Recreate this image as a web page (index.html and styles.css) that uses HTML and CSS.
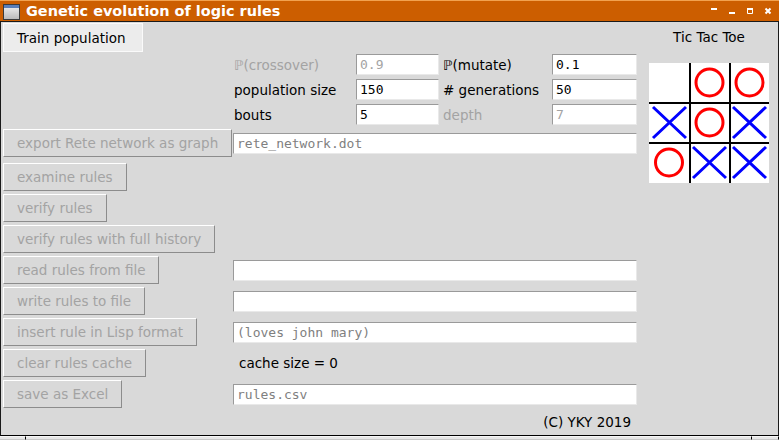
FILE: index.html
```html
<!DOCTYPE html>
<html>
<head>
<meta charset="utf-8">
<link rel="stylesheet" href="styles.css">
</head>
<body>
<div class="window">
  <div class="titlebar">
    <svg class="app-icon" width="17" height="16" viewBox="0 0 17 16">
      <defs>
        <linearGradient id="ig" x1="0" y1="0" x2="0" y2="1">
          <stop offset="0" stop-color="#f4f4f4"/>
          <stop offset="1" stop-color="#b8b8b8"/>
        </linearGradient>
      </defs>
      <rect x="0.5" y="0.5" width="16" height="15" fill="url(#ig)" stroke="#3a3a3a"/>
      <rect x="1" y="1" width="15" height="3" fill="#5b7fb8"/>
    </svg>
    <span class="title">Genetic evolution of logic rules</span>
    <svg class="controls" width="75" height="21" viewBox="0 0 75 21">
      <rect x="7" y="8" width="6" height="2" fill="#fff"/>
      <rect x="25" y="12" width="6" height="2" fill="#fff"/>
      <path d="M43.5 8.5h5v5h-5z" fill="none" stroke="#fff" stroke-width="1"/>
      <rect x="43" y="8" width="6" height="2" fill="#fff"/>
      <path d="M61.5 8.5l5 5M66.5 8.5l-5 5" stroke="#fff" stroke-width="2"/>
    </svg>
  </div>
  <div class="content">
    <div class="left">
      <div class="train-row"><div class="btn active">Train population</div></div>
      <div class="params">
        <div class="plabel dim">ℙ(crossover)</div>
        <div class="entry small mono dim">0.9</div>
        <div class="plabel">ℙ(mutate)</div>
        <div class="entry small mono">0.1</div>
        <div class="plabel">population size</div>
        <div class="entry small mono">150</div>
        <div class="plabel"># generations</div>
        <div class="entry small mono">50</div>
        <div class="plabel">bouts</div>
        <div class="entry small mono">5</div>
        <div class="plabel dim">depth</div>
        <div class="entry small mono dim">7</div>
      </div>
      <div class="rows">
        <div class="row first">
          <div class="btn">export Rete network as graph</div>
          <div class="entry mono grey">rete_network.dot</div>
        </div>
        <div class="row"><div class="btn">examine rules</div></div>
        <div class="row"><div class="btn">verify rules</div></div>
        <div class="row"><div class="btn">verify rules with full history</div></div>
        <div class="row">
          <div class="btn">read rules from file</div>
          <div class="entry mono"></div>
        </div>
        <div class="row">
          <div class="btn">write rules to file</div>
          <div class="entry mono"></div>
        </div>
        <div class="row">
          <div class="btn">insert rule in Lisp format</div>
          <div class="entry mono grey">(loves john mary)</div>
        </div>
        <div class="row">
          <div class="btn">clear rules cache</div>
          <div class="cache">cache size = 0</div>
        </div>
        <div class="row">
          <div class="btn">save as Excel</div>
          <div class="entry mono grey">rules.csv</div>
        </div>
      </div>
      <div class="footer">(C) YKY 2019</div>
    </div>
    <div class="right">
      <div class="ttt-label">Tic Tac Toe</div>
      <svg class="board" width="120" height="120" viewBox="0 0 120 120">
        <rect width="120" height="120" fill="#fff"/>
        <rect x="40" y="0" width="2" height="120" fill="#000"/>
        <rect x="80" y="0" width="2" height="120" fill="#000"/>
        <rect x="0" y="39" width="120" height="2" fill="#000"/>
        <rect x="0" y="79" width="120" height="2" fill="#000"/>
        <g fill="none" stroke="#f00" stroke-width="3">
          <circle cx="60.5" cy="19.5" r="13.5"/>
          <circle cx="100.5" cy="19.5" r="13.5"/>
          <circle cx="60.5" cy="59.5" r="13.5"/>
          <circle cx="20" cy="99.5" r="13.5"/>
        </g>
        <g stroke="#00f" stroke-width="3">
          <path d="M4 44l33 31M37 44l-33 31"/>
          <path d="M84 44l33 31M117 44l-33 31"/>
          <path d="M44 84l33 31M77 84l-33 31"/>
          <path d="M84 84l33 31M117 84l-33 31"/>
        </g>
      </svg>
    </div>
  </div>
  <div class="bottom">
    <div class="seg s1"></div>
    <div class="seg s2"></div>
    <div class="seg s3"></div>
  </div>
</div>
</body>
</html>
```

FILE: styles.css
```css
html, body {
  margin: 0;
  padding: 0;
  background: #d9d9d9;
}
body {
  width: 779px;
  height: 440px;
  overflow: hidden;
  font-family: "DejaVu Sans", sans-serif;
  font-size: 13.5px;
  color: #000;
}
.window {
  width: 779px;
  height: 440px;
  display: flex;
  flex-direction: column;
  background: #d9d9d9;
}
.titlebar {
  height: 20px;
  background: #cc5e00;
  border-top: 1px solid #f2a24f;
  border-bottom: 1px solid #1a1a1a;
  display: flex;
  align-items: center;
  flex: none;
}
.app-icon {
  margin-left: 3px;
  margin-top: 1px;
  flex: none;
}
.title {
  margin-left: 6px;
  font-weight: bold;
  font-size: 14.45px;
  color: #fff;
  line-height: 16px;
}
.controls {
  margin-left: auto;
  margin-top: -1px;
  flex: none;
}
.content {
  flex: 1;
  display: flex;
  border-left: 1px solid #1a1a1a;
  border-right: 1px solid #1a1a1a;
  border-bottom: 1px solid #000;
  min-height: 0;
}
.left {
  width: 634px;
  padding-left: 2px;
  padding-top: 1px;
  display: flex;
  flex-direction: column;
}
.train-row {
  height: 29px;
  display: flex;
}
.btn {
  box-sizing: border-box;
  height: 28px;
  padding: 0 13px;
  display: flex;
  align-items: center;
  white-space: nowrap;
  color: #a3a3a3;
  background: #d9d9d9;
  border-top: 1px solid #ffffff;
  border-left: 1px solid #ffffff;
  border-bottom: 1px solid #8c8c8c;
  border-right: 1px solid #8c8c8c;
}
.btn.active {
  height: 29px;
  padding: 0 16px 0 13px;
  background: #ececec;
  color: #000;
  border: 1px solid #fafafa;
}
.params {
  margin-top: 2px;
  margin-left: 230px;
  display: grid;
  grid-template-columns: 123px 83px 113px 85px;
  grid-auto-rows: 21px;
  row-gap: 4px;
}
.plabel {
  display: flex;
  align-items: center;
  padding-left: 1px;
  white-space: nowrap;
}
.plabel:nth-child(4n+3) {
  padding-left: 4px;
}
.dim {
  color: #a3a3a3;
}
.entry {
  box-sizing: border-box;
  height: 21px;
  background: #fff;
  border-top: 1px solid #9a9a9a;
  border-left: 1px solid #9a9a9a;
  border-right: 1px solid #e9e9e9;
  border-bottom: 1px solid #e9e9e9;
  padding-left: 3px;
  display: flex;
  align-items: center;
  white-space: nowrap;
}
.mono {
  font-family: "DejaVu Sans Mono", monospace;
  font-size: 13px;
}
.grey {
  color: #808080;
}
.entry.dim {
  color: #a3a3a3;
}
.rows {
  margin-top: 4px;
  display: flex;
  flex-direction: column;
  gap: 3px;
}
.row {
  display: grid;
  grid-template-columns: 230px 404px;
  align-items: center;
  justify-items: start;
  height: 28px;
}
.row.first {
  margin-bottom: 3px;
}
.row .entry {
  width: 404px;
  justify-self: stretch;
}
.cache {
  padding-left: 6px;
}
.footer {
  margin-top: auto;
  text-align: right;
  padding-right: 6px;
  padding-bottom: 5px;
  line-height: 16px;
}
.right {
  flex: 1;
  padding-left: 2px;
  display: flex;
  flex-direction: column;
  align-items: center;
}
.ttt-label {
  margin-top: 7px;
  line-height: 16px;
  margin-left: 1px;
}
.board {
  margin-top: 18px;
  display: block;
}
.bottom {
  height: 4px;
  flex: none;
  display: flex;
  background: #e6e6e6;
}
.seg {
  height: 4px;
  box-sizing: border-box;
  border-top: 1px solid #f6f6f6;
  border-bottom: 1px solid #c8c8c8;
}
.s1 {
  width: 26px;
  border-right: 1px solid #000;
}
.s2 {
  width: 726px;
  border-right: 1px solid #000;
}
.s3 {
  flex: 1;
  border-right: 1px solid #000;
}
```
